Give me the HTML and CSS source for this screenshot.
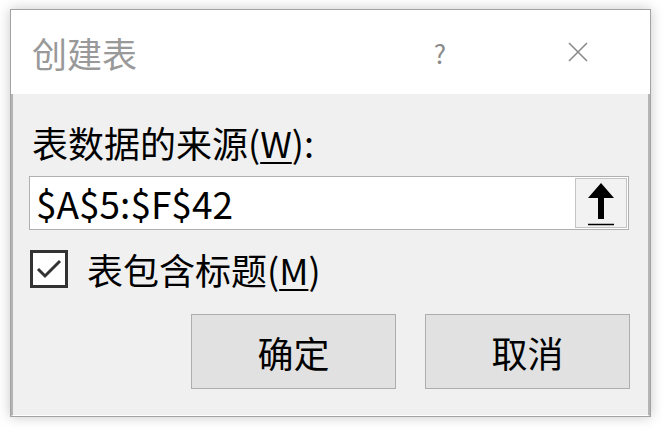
FILE: index.html
```html
<!DOCTYPE html>
<html lang="zh-CN">
<head>
<meta charset="utf-8">
<title>创建表</title>
<link rel="stylesheet" href="styles.css">
</head>
<body>
<div class="dialog">
  <div class="titlebar">
    <span class="title">创建表</span>
    <span class="help">?</span>
    <span class="close">
      <svg width="22" height="22" viewBox="0 0 22 22"><path d="M2 2 L20 20 M20 2 L2 20" stroke="#8a8a8a" stroke-width="1.6" fill="none"/></svg>
    </span>
  </div>
  <div class="body">
    <div class="label">表数据的来源(<u>W</u>):</div>
    <div class="field">
      <span class="value">$A$5:$F$42</span>
      <span class="picker">
        <svg width="50" height="48" viewBox="0 0 50 48">
          <polygon points="25,4 38,19 28,19 28,40 22,40 22,19 12,19" fill="#000"/>
          <polygon points="25,11 32,19 18,19" fill="#000"/>
          <path d="M12 45.5 H38" stroke="#000" stroke-width="1.5"/>
        </svg>
      </span>
    </div>
    <div class="checkrow">
      <span class="checkbox">
        <svg width="32" height="32" viewBox="0 0 32 32"><path d="M5 16 L12 23 L27 8" stroke="#333" stroke-width="3" fill="none"/></svg>
      </span>
      <span class="checklabel">表包含标题(<u>M</u>)</span>
    </div>
    <div class="buttons">
      <button class="btn">确定</button>
      <button class="btn">取消</button>
    </div>
  </div>
</div>
</body>
</html>
```

FILE: styles.css
```css
html, body {
  margin: 0;
  padding: 0;
  background: #ffffff;
}
body {
  width: 664px;
  height: 432px;
  overflow: hidden;
  font-family: "Noto Sans CJK SC", "Noto Sans", sans-serif;
}
.dialog {
  margin: 9px 0 0 10px;
  width: 639px;
  height: 406px;
  border: 1px solid #a3a3a3;
  background: #ffffff;
  box-shadow: 0 0 12px rgba(0, 0, 0, 0.22);
  display: flex;
  flex-direction: column;
}
.titlebar {
  height: 84px;
  display: flex;
  align-items: center;
  padding-left: 21px;
  background: #ffffff;
}
.title {
  font-size: 35px;
  color: #999999;
  flex: 1;
}
.help {
  font-size: 26px;
  color: #8a8a8a;
  width: 20px;
  text-align: center;
  margin-right: 117px;
}
.close {
  display: flex;
  margin-right: 61px;
}
.body {
  flex: 1;
  background: #f0f0f0;
  border-left: 2px solid #b4b4b4;
  border-right: 2px solid #b4b4b4;
  border-bottom: 1px solid #ffffff;
  padding: 27px 18px 0 16px;
}
.label {
  font-size: 36px;
  line-height: 43px;
  color: #000;
  padding-left: 3px;
}
.label u, .checklabel u {
  text-decoration-thickness: 1.5px;
  text-underline-offset: 4px;
}
.field {
  margin-top: 12px;
  height: 52px;
  width: 598px;
  border: 1px solid #b0b0b0;
  background: #ffffff;
  display: flex;
  align-items: center;
}
.value {
  flex: 1;
  font-size: 37px;
  padding-left: 6px;
  color: #000;
  line-height: 52px;
}
.picker {
  width: 50px;
  height: 48px;
  margin-right: 1px;
  background: #f2f2f2;
  border: 1px solid #c4c4c4;
  display: flex;
}
.checkrow {
  margin-top: 19px;
  display: flex;
  align-items: center;
  height: 40px;
}
.checkbox {
  width: 32px;
  height: 32px;
  border: 3px solid #333333;
  background: #ffffff;
  margin-left: 1px;
  display: flex;
}
.checklabel {
  font-size: 36px;
  line-height: 43px;
  margin-left: 19px;
  color: #000;
}
.buttons {
  margin-top: 25px;
  display: flex;
  justify-content: flex-end;
  gap: 29px;
}
.btn {
  width: 205px;
  height: 75px;
  background: #e1e1e1;
  border: 1px solid #adadad;
  font-family: "Noto Sans CJK SC", "Noto Sans", sans-serif;
  font-size: 36px;
  color: #000;
  padding: 0;
  margin: 0;
}
```
